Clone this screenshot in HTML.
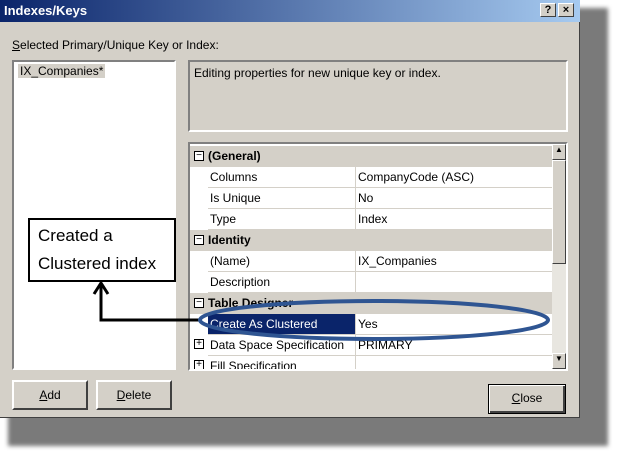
<!DOCTYPE html>
<html><head><style>
*{margin:0;padding:0;box-sizing:border-box}
body{width:628px;height:460px;background:#fff;position:relative;overflow:hidden;font-family:"Liberation Sans",sans-serif;font-size:12px;color:#000}
.abs{position:absolute}
.shadow{left:8px;top:8px;width:600px;height:438px;background:#7a7a7a;filter:blur(2px)}
.dlg{left:0;top:0;width:580px;height:418px;background:#d4d0c8;border-right:1px solid #404040;border-bottom:1px solid #404040}
.title{left:0;top:0;width:580px;height:22px;background:linear-gradient(90deg,#0a246a,#a6caf0);color:#fff;font-weight:bold;font-size:13px;padding:3px 4px}
.tb{top:3px;width:16px;height:14px;background:#d4d0c8;border:1px solid;border-color:#fff #404040 #404040 #fff;color:#000;font-weight:bold;font-size:11px;text-align:center;line-height:12px}
.sunk{border:2px solid;border-color:#808080 #fff #fff #808080}
.row{position:absolute;left:18px;width:345px;height:21px;border-bottom:1px solid #d4d0c8;background:#fff}
.row span{position:absolute;top:3px}
.cat{position:absolute;left:0;width:362px;height:21px;background:#d4d0c8;font-weight:bold}
.btn{height:30px;background:#d4d0c8;border:2px solid;border-color:#fff #404040 #404040 #fff;text-align:center;line-height:26px;font-size:12px}
.pm{position:absolute;left:4px;top:5px;width:10px;height:10px;border:1px solid #000;background:#fff;font-size:10px;line-height:7px;text-align:center;font-weight:normal}
</style></head><body>
<div class="abs shadow"></div>
<div class="abs dlg"></div>
<div class="abs title">Indexes/Keys</div>
<div class="abs tb" style="left:540px">?</div>
<div class="abs tb" style="left:558px">×</div>
<div class="abs" style="left:12px;top:38px"><u>S</u>elected Primary/Unique Key or Index:</div>
<div class="abs sunk" style="left:12px;top:60px;width:164px;height:310px;background:#fff">
 <div style="margin:2px 4px;background:#d4d0c8;display:inline-block;padding:0 2px">IX_Companies*</div></div>
<div class="abs sunk" style="left:188px;top:60px;width:380px;height:72px;background:#d4d0c8;padding:4px">Editing properties for new unique key or index.</div>
<div class="abs sunk" style="left:188px;top:142px;width:380px;height:229px;background:#fff;overflow:hidden">
 <div style="position:relative">
 <div class="cat" style="top:2px"><div class="pm">−</div><span style="position:absolute;left:18px;top:3px">(General)</span></div>
 <div class="row" style="top:23px"><span style="left:2px">Columns</span><span style="left:150px">CompanyCode (ASC)</span></div>
 <div class="row" style="top:44px"><span style="left:2px">Is Unique</span><span style="left:150px">No</span></div>
 <div class="row" style="top:65px"><span style="left:2px">Type</span><span style="left:150px">Index</span></div>
 <div class="cat" style="top:86px"><div class="pm">−</div><span style="position:absolute;left:18px;top:3px">Identity</span></div>
 <div class="row" style="top:107px"><span style="left:2px">(Name)</span><span style="left:150px">IX_Companies</span></div>
 <div class="row" style="top:128px"><span style="left:2px">Description</span></div>
 <div class="cat" style="top:149px"><div class="pm">−</div><span style="position:absolute;left:18px;top:3px">Table Designer</span></div>
 <div class="row" style="top:170px"><span style="left:0;top:0;width:148px;height:20px;background:#0a246a;color:#fff;padding:3px 2px">Create As Clustered</span><span style="left:150px">Yes</span></div>
 <div class="row" style="top:191px"><span style="left:2px">Data Space Specification</span><span style="left:150px">PRIMARY</span></div>
 <div class="pm" style="top:195px">+</div>
 <div class="row" style="top:212px"><span style="left:2px">Fill Specification</span></div>
 <div class="pm" style="top:216px">+</div>
 <div style="position:absolute;left:165px;top:23px;width:1px;height:210px;background:#d4d0c8"></div>
 <div style="position:absolute;left:362px;top:0;width:14px;height:230px;background:#e8e6e0">
  <div style="height:16px;background:#d4d0c8;border:1px solid;border-color:#fff #404040 #404040 #fff;font-size:8px;text-align:center">▲</div>
  <div style="height:104px;background:#d4d0c8;border:1px solid;border-color:#fff #404040 #404040 #fff"></div>
  <div style="position:absolute;top:209px;width:14px;height:16px;background:#d4d0c8;border:1px solid;border-color:#fff #404040 #404040 #fff;font-size:8px;text-align:center">▼</div>
 </div>
 </div>
</div>
<div class="abs btn" style="left:12px;top:380px;width:76px"><u>A</u>dd</div>
<div class="abs btn" style="left:96px;top:380px;width:76px"><u>D</u>elete</div>
<div class="abs btn" style="left:488px;top:384px;width:78px;border:1px solid #000;box-shadow:inset 1px 1px #fff,inset -2px -2px #404040"><u>C</u>lose</div>
<div class="abs" style="left:28px;top:218px;width:148px;height:64px;background:#fff;border:2px solid #000;font-family:'Liberation Sans',sans-serif;font-size:17px;line-height:28px;padding:2px 8px">Created a<br>Clustered index</div>
<svg class="abs" style="left:0;top:0" width="628" height="460">
 <path d="M101 284 V320 H200" fill="none" stroke="#000" stroke-width="3"/>
 <path d="M94 294 L101 283 L108 294" fill="none" stroke="#000" stroke-width="3"/>
 <ellipse cx="374" cy="320" rx="174" ry="19" fill="none" stroke="#2f5592" stroke-width="4"/>
</svg>
</body></html>
